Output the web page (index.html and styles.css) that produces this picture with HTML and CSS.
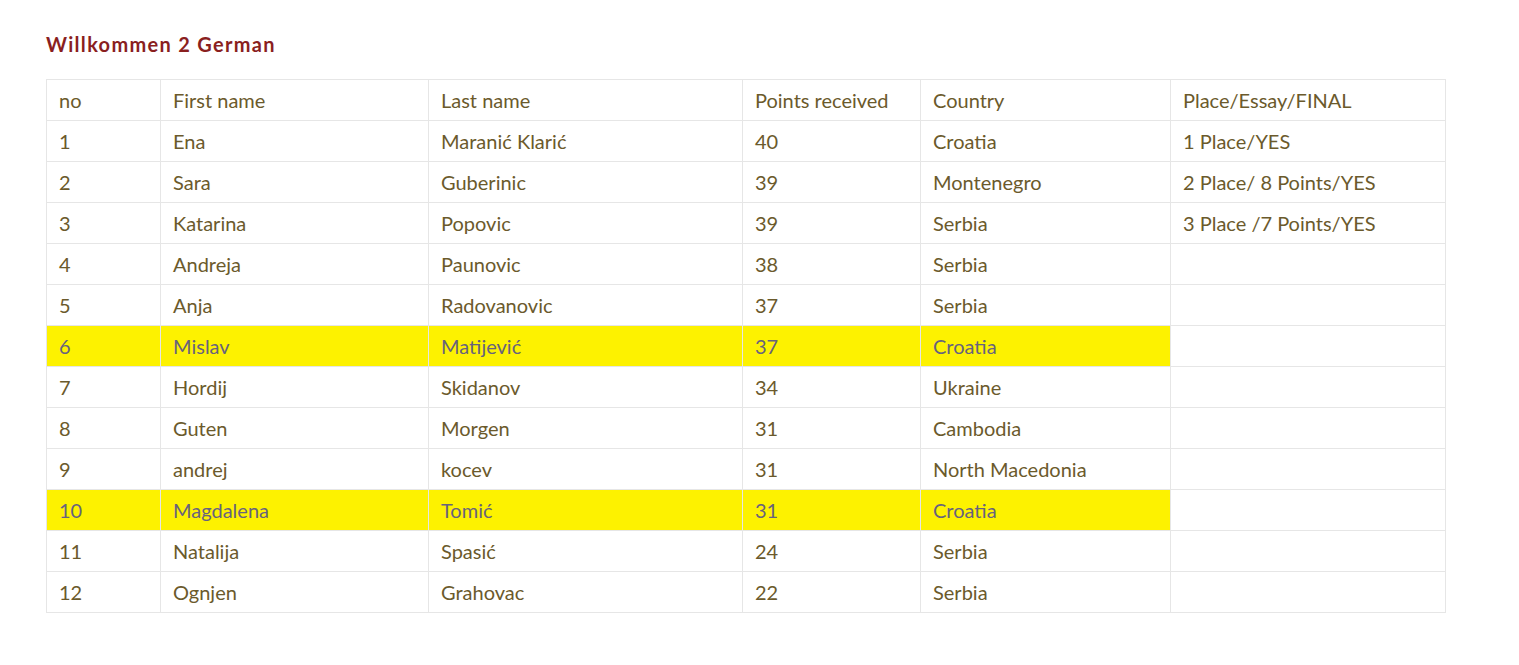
FILE: index.html
```html
<!DOCTYPE html>
<html>
<head>
<meta charset="utf-8">
<link rel="stylesheet" href="styles.css">
</head>
<body>
<div class="page">
  <h2 class="title">Willkommen 2 German</h2>
  <table class="results">
    <colgroup>
      <col class="c1"><col class="c2"><col class="c3"><col class="c4"><col class="c5"><col class="c6">
    </colgroup>
    <tr><td>no</td><td>First name</td><td>Last name</td><td>Points received</td><td>Country</td><td>Place/Essay/FINAL</td></tr>
    <tr><td>1</td><td>Ena</td><td>Maranić Klarić</td><td>40</td><td>Croatia</td><td>1 Place/YES</td></tr>
    <tr><td>2</td><td>Sara</td><td>Guberinic</td><td>39</td><td>Montenegro</td><td>2 Place/ 8 Points/YES</td></tr>
    <tr><td>3</td><td>Katarina</td><td>Popovic</td><td>39</td><td>Serbia</td><td>3 Place /7 Points/YES</td></tr>
    <tr><td>4</td><td>Andreja</td><td>Paunovic</td><td>38</td><td>Serbia</td><td></td></tr>
    <tr><td>5</td><td>Anja</td><td>Radovanovic</td><td>37</td><td>Serbia</td><td></td></tr>
    <tr class="hl"><td>6</td><td>Mislav</td><td>Matijević</td><td>37</td><td>Croatia</td><td class="plain"></td></tr>
    <tr><td>7</td><td>Hordij</td><td>Skidanov</td><td>34</td><td>Ukraine</td><td></td></tr>
    <tr><td>8</td><td>Guten</td><td>Morgen</td><td>31</td><td>Cambodia</td><td></td></tr>
    <tr><td>9</td><td>andrej</td><td>kocev</td><td>31</td><td>North Macedonia</td><td></td></tr>
    <tr class="hl"><td>10</td><td>Magdalena</td><td>Tomić</td><td>31</td><td>Croatia</td><td class="plain"></td></tr>
    <tr><td>11</td><td>Natalija</td><td>Spasić</td><td>24</td><td>Serbia</td><td></td></tr>
    <tr><td>12</td><td>Ognjen</td><td>Grahovac</td><td>22</td><td>Serbia</td><td></td></tr>
  </table>
</div>
</body>
</html>
```
FILE: styles.css
```css
html, body {
  margin: 0;
  padding: 0;
  background: #ffffff;
}
body {
  font-family: Lato, "Liberation Sans", sans-serif;
}
.page {
  padding: 31px 0 0 46px;
}
.title {
  margin: 0 0 22px 0;
  font-size: 20px;
  line-height: 26px;
  font-weight: 700;
  color: #8a1f1f;
  letter-spacing: 1.3px;
}
.results {
  border-collapse: collapse;
  table-layout: fixed;
  width: 1400px;
  font-size: 20px;
  color: #6b5a2c;
}
.c1 { width: 114px; }
.c2 { width: 268px; }
.c3 { width: 314px; }
.c4 { width: 178px; }
.c5 { width: 250px; }
.c6 { width: 275px; }
.results td {
  border: 1px solid #e6e6e6;
  height: 41px;
  padding: 0 12px;
  box-sizing: border-box;
  vertical-align: middle;
  line-height: 22px;
}
.results tr.hl td {
  background: #fdf200;
  color: #67627e;
}
.results tr.hl td.plain {
  background: #ffffff;
}
```
